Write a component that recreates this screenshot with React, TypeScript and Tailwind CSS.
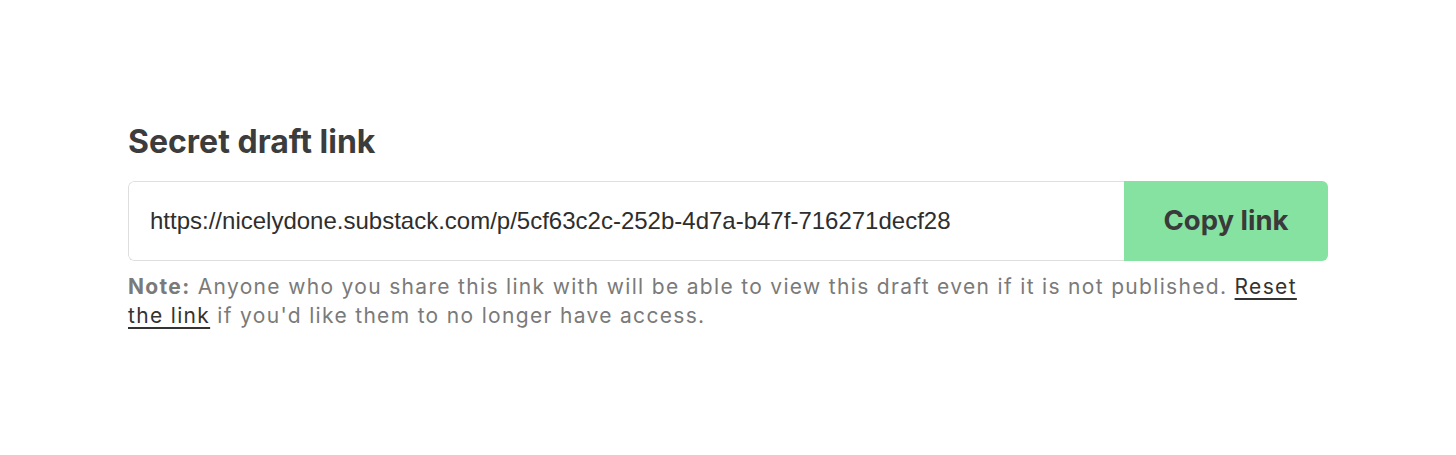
export default function App() {
    return (
        <div className="min-h-[455px] w-full bg-white">
            <div className="w-[1200px] ml-[128px] pt-[120px]">
                <h2
                    className="text-[32px] font-bold leading-[44px] text-[#3c3c3c]"
                    style={{ fontFamily: 'Inter, "Noto Sans", sans-serif' }}
                >
                    Secret draft link
                </h2>
                <div className="mt-[17px] flex h-[80px] rounded-[6px] overflow-hidden">
                    <div className="flex-1 flex items-center pl-[21px] border border-r-0 border-[#dedede] rounded-l-[6px]">
                        <span
                            className="text-[24px] text-[#2e2e2e]"
                            style={{ fontFamily: '"Liberation Sans", Arial, sans-serif' }}
                        >
                            https://nicelydone.substack.com/p/5cf63c2c-252b-4d7a-b47f-716271decf28
                        </span>
                    </div>
                    <button
                        className="w-[204px] bg-[#86e2a0] text-[#3a3a3a] text-[27.5px] font-bold"
                        style={{ fontFamily: 'Inter, "Noto Sans", sans-serif' }}
                    >
                        Copy link
                    </button>
                </div>
                <p
                    className="mt-[11px] text-[21px] leading-[29px] tracking-[0.063em] text-[#7a7a7a]"
                    style={{ fontFamily: 'Inter, "Noto Sans", sans-serif' }}
                >
                    <span className="font-bold">Note:</span> Anyone who you share this link with will be able to view this draft even if it is not published.{' '}
                    <a className="text-[#333] underline underline-offset-[4px]">Reset the link</a> if you'd like them to no longer have access.
                </p>
            </div>
        </div>
    );
}
